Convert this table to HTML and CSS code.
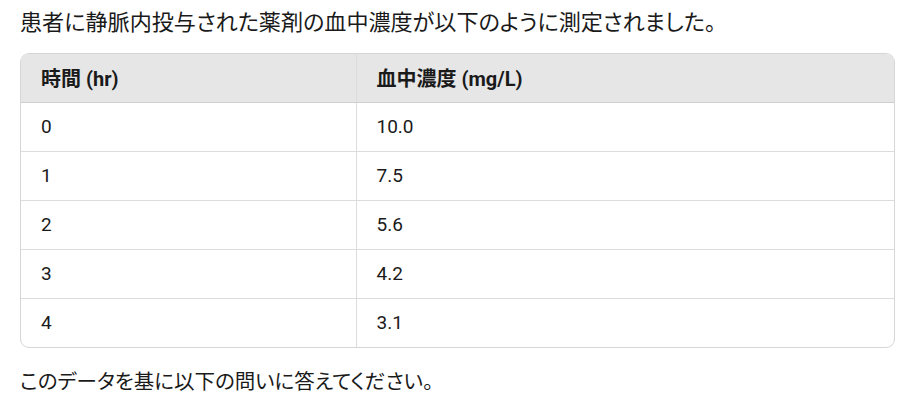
FILE: index.html
```html
<!DOCTYPE html>
<html lang="ja">
<head>
<meta charset="utf-8">
<link rel="stylesheet" href="styles.css">
</head>
<body>
<p class="text intro">患者に静脈内投与された薬剤の血中濃度が以下のように測定されました。</p>
<div class="table-wrap">
  <table class="data">
    <thead>
      <tr><th class="col1">時間 (hr)</th><th>血中濃度 (mg/L)</th></tr>
    </thead>
    <tbody>
      <tr><td>0</td><td>10.0</td></tr>
      <tr><td>1</td><td>7.5</td></tr>
      <tr><td>2</td><td>5.6</td></tr>
      <tr><td>3</td><td>4.2</td></tr>
      <tr><td>4</td><td>3.1</td></tr>
    </tbody>
  </table>
</div>
<p class="text outro">このデータを基に以下の問いに答えてください。</p>
</body>
</html>
```
FILE: styles.css
```css
html, body {
  margin: 0;
  background: #ffffff;
}
body {
  padding: 6px 17px 0 20px;
  font-family: Roboto, "Noto Sans CJK JP", sans-serif;
  font-feature-settings: "palt";
  color: #1a1a1a;
  font-size: 21px;
}
.text {
  margin: 0;
  line-height: 32px;
}
.intro {
  font-size: 22.1px;
  margin-bottom: 15px;
}
.outro {
  font-size: 20.5px;
  margin-top: 18px;
}
.table-wrap {
  border: 1px solid #d6d6d6;
  border-radius: 9px;
  overflow: hidden;
}
.data {
  width: 100%;
  border-collapse: collapse;
  table-layout: fixed;
}
.data th,
.data td {
  height: 49px;
  padding: 0 20px;
  text-align: left;
  vertical-align: middle;
  font-size: 19px;
  box-sizing: border-box;
}
.data th {
  height: 48px;
  background: #e6e6e6;
  font-weight: 700;
  font-size: 20px;
  border-bottom: 1px solid #cfcfcf;
}
.data td {
  border-top: 1px solid #dcdcdc;
}
.data tbody tr:first-child td {
  border-top: none;
}
.data th:first-child,
.data td:first-child {
  width: 335px;
  border-right: 1px solid #dcdcdc;
}
```
